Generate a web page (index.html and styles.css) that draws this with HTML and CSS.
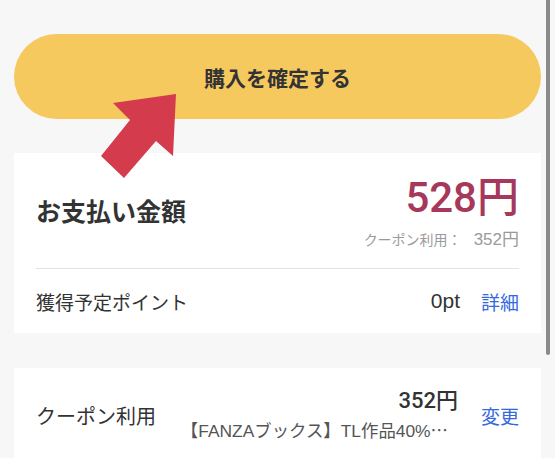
FILE: index.html
```html
<!DOCTYPE html>
<html lang="ja">
<head>
<meta charset="utf-8">
<link rel="stylesheet" href="styles.css">
</head>
<body>
<div class="page">
  <button class="buy-btn">購入を確定する</button>

  <section class="card summary">
    <div class="total-row">
      <div class="total-label">お支払い金額</div>
      <div class="total-values">
        <div class="price">528円</div>
        <div class="coupon-note"><span class="note-label">クーポン利用：</span><span class="note-amount">352円</span></div>
      </div>
    </div>
    <div class="divider"></div>
    <div class="points-row">
      <div class="row-label">獲得予定ポイント</div>
      <div class="row-right">
        <span class="points">0pt</span>
        <a class="link">詳細</a>
      </div>
    </div>
  </section>

  <section class="card coupon">
    <div class="coupon-row">
      <div class="row-label coupon-label">クーポン利用</div>
      <div class="coupon-info">
        <div class="coupon-amount">352円</div>
        <div class="coupon-name">【FANZAブックス】TL作品40%<span class="ellipsis">…</span></div>
      </div>
      <a class="link">変更</a>
    </div>
  </section>
</div>

<svg class="arrow" width="555" height="458" viewBox="0 0 555 458">
  <polygon points="176,94 113,103 130,120 101,156 124,178 156,141 173,156" fill="#d43c4d"/>
</svg>
<div class="scroll-thumb"></div>
</body>
</html>
```

FILE: styles.css
```css
* { box-sizing: border-box; }
html, body { margin: 0; padding: 0; }
body {
  width: 555px;
  height: 458px;
  overflow: hidden;
  background: #f7f7f7;
  font-family: "Liberation Sans", "Noto Sans CJK JP", sans-serif;
  color: #333;
  position: relative;
}
.page {
  padding: 34px 14px 0;
  display: flex;
  flex-direction: column;
}
.buy-btn {
  height: 85px;
  width: 100%;
  border: none;
  border-radius: 43px;
  background: #f6c95f;
  color: #333;
  font-family: "Noto Sans CJK JP", sans-serif;
  font-weight: 700;
  font-size: 21px;
  margin: 0 0 34px;
  padding: 0;
}
.card {
  background: #fff;
  padding: 0 22px;
}
.summary { height: 180px; margin-bottom: 35px; }
.total-row {
  display: flex;
  justify-content: space-between;
  align-items: flex-start;
  padding-top: 22px;
  height: 115px;
}
.total-label {
  font-family: "Noto Sans CJK JP", sans-serif;
  font-weight: 700;
  font-size: 25px;
  line-height: 36px;
  color: #333;
  margin-top: 17px;
}
.total-values {
  display: flex;
  flex-direction: column;
  align-items: flex-end;
}
.price {
  color: #a6385c;
  font-family: "Roboto", "Noto Sans CJK JP", sans-serif;
  font-size: 42px;
  font-weight: 500;
  line-height: 46px;
}
.coupon-note {
  color: #9a9a9a;
  line-height: 20px;
  margin-top: 9px;
  display: flex;
  align-items: baseline;
}
.note-label { font-size: 14px; margin-right: 12px; }
.note-amount { font-size: 17px; }
.divider {
  height: 1px;
  background: #e3e3e3;
}
.points-row {
  display: flex;
  justify-content: space-between;
  align-items: center;
  height: 64px;
}
.row-label {
  font-size: 19px;
  color: #333;
}
.coupon-label { font-size: 20px; }
.row-right {
  display: flex;
  align-items: center;
  gap: 21px;
}
.points { font-size: 21px; color: #333; }
.link { color: #3569de; font-size: 19px; }
.coupon { height: 120px; }
.coupon-row {
  display: flex;
  align-items: center;
  padding-top: 20px;
}
.coupon-row .row-label { flex: 1; }
.coupon-info {
  display: flex;
  flex-direction: column;
  align-items: flex-end;
  margin-right: 23px;
}
.coupon-amount {
  font-family: "Roboto", "Noto Sans CJK JP", sans-serif;
  font-size: 22px;
  font-weight: 500;
  line-height: 26px;
}
.coupon-name {
  font-size: 17.4px;
  color: #555;
  line-height: 24px;
  margin-top: 4px;
  padding-right: 10px;
}
.ellipsis { font-family: "Noto Sans CJK JP", sans-serif; }
.arrow {
  position: absolute;
  left: 0;
  top: 0;
  pointer-events: none;
}
.scroll-thumb {
  position: absolute;
  left: 546px;
  top: 0;
  width: 4px;
  height: 355px;
  background: #8a8a8a;
  border-radius: 0 0 2px 2px;
}
```
